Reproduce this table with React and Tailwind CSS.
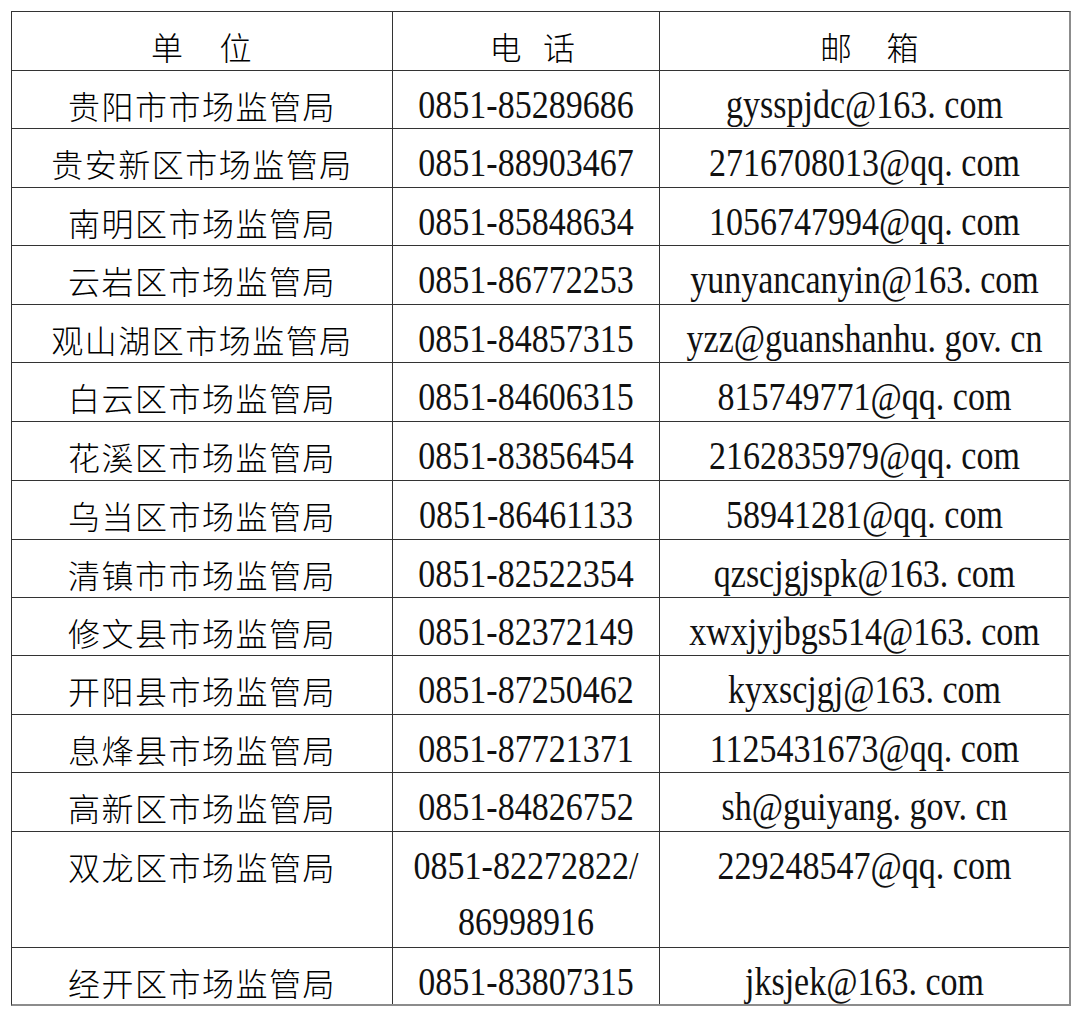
import React from 'react';

const rows = [
  { name: '贵阳市市场监管局', phone: ['0851-85289686'], email: 'gysspjdc@163. com', h: 'h-[58px]' },
  { name: '贵安新区市场监管局', phone: ['0851-88903467'], email: '2716708013@qq. com', h: 'h-[59px]' },
  { name: '南明区市场监管局', phone: ['0851-85848634'], email: '1056747994@qq. com', h: 'h-[58px]' },
  { name: '云岩区市场监管局', phone: ['0851-86772253'], email: 'yunyancanyin@163. com', h: 'h-[59px]' },
  { name: '观山湖区市场监管局', phone: ['0851-84857315'], email: 'yzz@guanshanhu. gov. cn', h: 'h-[58px]' },
  { name: '白云区市场监管局', phone: ['0851-84606315'], email: '815749771@qq. com', h: 'h-[59px]' },
  { name: '花溪区市场监管局', phone: ['0851-83856454'], email: '2162835979@qq. com', h: 'h-[59px]' },
  { name: '乌当区市场监管局', phone: ['0851-86461133'], email: '58941281@qq. com', h: 'h-[59px]' },
  { name: '清镇市市场监管局', phone: ['0851-82522354'], email: 'qzscjgjspk@163. com', h: 'h-[58px]' },
  { name: '修文县市场监管局', phone: ['0851-82372149'], email: 'xwxjyjbgs514@163. com', h: 'h-[58px]' },
  { name: '开阳县市场监管局', phone: ['0851-87250462'], email: 'kyxscjgj@163. com', h: 'h-[59px]' },
  { name: '息烽县市场监管局', phone: ['0851-87721371'], email: '1125431673@qq. com', h: 'h-[58px]' },
  { name: '高新区市场监管局', phone: ['0851-84826752'], email: 'sh@guiyang. gov. cn', h: 'h-[59px]' },
  { name: '双龙区市场监管局', phone: ['0851-82272822/', '86998916'], email: '229248547@qq. com', h: 'h-[116px]' },
  { name: '经开区市场监管局', phone: ['0851-83807315'], email: 'jksjek@163. com', h: 'h-[56px]', last: true },
];

const cjk = "font-['Noto_Sans_CJK_SC',sans-serif] font-light text-[32px] tracking-[1.5px] leading-[56px] text-black";
const latin = "inline-block font-['Liberation_Serif','Noto_Sans_CJK_SC',serif] text-[34px] leading-[56px] text-[#111] scale-y-[1.17]";

const Row = ({ row }) => (
  <div className={`flex ${row.h} ${row.last ? '' : 'border-b border-[#333]'}`}>
    <div className="flex w-[381px] shrink-0 items-start justify-center border-r border-[#333] pt-[6px]">
      <span className={cjk}>{row.name}</span>
    </div>
    <div className="flex w-[267px] shrink-0 flex-col items-center border-r border-[#333] pt-[6px]">
      {row.phone.map((p) => (
        <span key={p} className={latin}>{p}</span>
      ))}
    </div>
    <div className="flex flex-1 items-start justify-center pt-[6px]">
      <span className={latin}>{row.email}</span>
    </div>
  </div>
);

export default function App() {
  return (
    <div className="min-h-[1016px] w-[1080px] bg-white pl-[11px] pt-[11px]">
      <div className="w-[1060px] overflow-hidden border-l border-t border-r-2 border-b-2 border-l-[#333] border-t-[#333] border-r-[#8c8c8c] border-b-[#8c8c8c]">
        <div className="flex h-[59px] border-b border-[#333]">
          <div className="flex w-[381px] shrink-0 items-start justify-center gap-[35px] border-r border-[#333] pt-[6px]">
            <span className={cjk}>单</span>
            <span className={cjk}>位</span>
          </div>
          <div className="flex w-[267px] shrink-0 items-start justify-center gap-[20px] border-r border-[#333] pl-[14px] pt-[6px]">
            <span className={cjk}>电</span>
            <span className={cjk}>话</span>
          </div>
          <div className="flex flex-1 items-start justify-center gap-[33px] pl-[11px] pt-[6px]">
            <span className={cjk}>邮</span>
            <span className={cjk}>箱</span>
          </div>
        </div>
        {rows.map((row) => (
          <Row key={row.name} row={row} />
        ))}
      </div>
    </div>
  );
}
